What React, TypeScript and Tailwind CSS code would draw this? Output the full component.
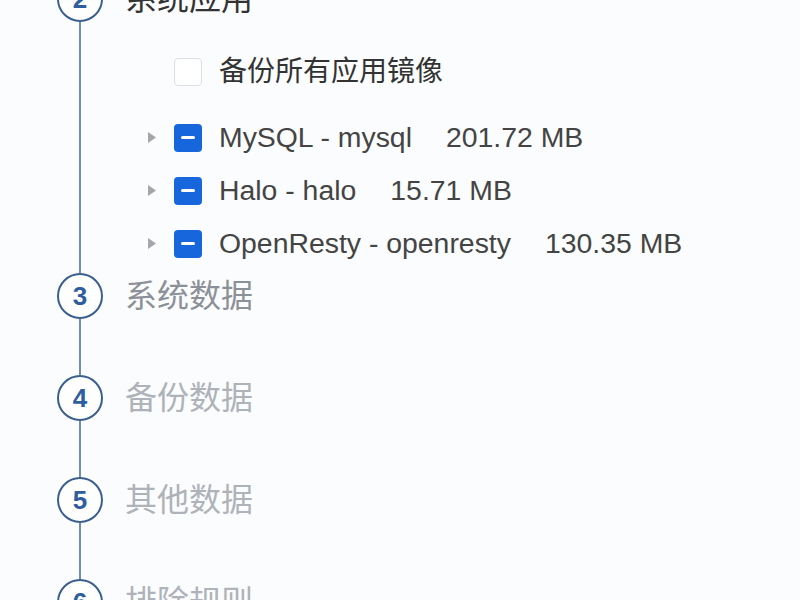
const font = { fontFamily: '"Liberation Sans", "Noto Sans CJK SC", sans-serif' };

const apps = [
  { name: 'MySQL - mysql', size: '201.72 MB' },
  { name: 'Halo - halo', size: '15.71 MB' },
  { name: 'OpenResty - openresty', size: '130.35 MB' }
];

const laterSteps = [
  { n: 3, label: '系统数据', color: 'text-[#8c9098]' },
  { n: 4, label: '备份数据', color: 'text-[#aeb2b9]' },
  { n: 5, label: '其他数据', color: 'text-[#aeb2b9]' },
  { n: 6, label: '排除规则', color: 'text-[#aeb2b9]' }
];

function Circle({ n }: { n: number }) {
  return (
    <div className="flex h-[46px] w-[46px] shrink-0 items-center justify-center rounded-full border-[2.5px] border-[#3a5f8f] bg-white text-[26px] font-bold text-[#2f5e9e]">
      {n}
    </div>
  );
}

function MinusBox() {
  return (
    <span className="flex h-[28px] w-[28px] shrink-0 items-center justify-center rounded-[4px] bg-[#1866dc]">
      <span className="h-[3px] w-[14px] rounded-full bg-white" />
    </span>
  );
}

export default function App() {
  return (
    <div className="min-h-screen overflow-hidden bg-[#fbfcfd]" style={font}>
      <div className="-mt-[24px] pl-[57px]">
        <div className="flex gap-[22px]">
          <div className="flex w-[46px] flex-col items-center">
            <Circle n={2} />
            <div className="w-[2px] flex-1 bg-[#6f8db2]" />
          </div>
          <div className="flex-1">
            <div className="h-[46px] text-[32px] leading-[46px] text-[#333]">系统应用</div>
            <div className="mt-[23px] flex h-[53px] items-center pl-[49px]">
              <span className="h-[28px] w-[28px] rounded-[4px] border border-[#dcdfe4] bg-white" />
              <span className="ml-[17px] text-[28px] text-[#333]">备份所有应用镜像</span>
            </div>
            <div className="mt-[13px] pb-[3px]">
              {apps.map((a) => (
                <div key={a.name} className="flex h-[53px] items-center pl-[22px]">
                  <svg width="10" height="13" viewBox="0 0 10 13" className="shrink-0">
                    <path d="M1 1 L9 6.5 L1 12 Z" fill="#a3a6ab" />
                  </svg>
                  <span className="ml-[17px]">
                    <MinusBox />
                  </span>
                  <span className="ml-[17px] whitespace-nowrap text-[28.4px] text-[#444]">{a.name}</span>
                  <span className="ml-[34px] whitespace-nowrap text-[28.4px] text-[#444]">{a.size}</span>
                </div>
              ))}
            </div>
          </div>
        </div>
        {laterSteps.map((s) => (
          <div key={s.n} className="flex gap-[22px]">
            <div className="flex w-[46px] flex-col items-center">
              <Circle n={s.n} />
              <div className="h-[56px] w-[2px] bg-[#6f8db2]" />
            </div>
            <div className={`h-[46px] text-[32px] leading-[46px] ${s.color}`}>{s.label}</div>
          </div>
        ))}
      </div>
    </div>
  );
}
